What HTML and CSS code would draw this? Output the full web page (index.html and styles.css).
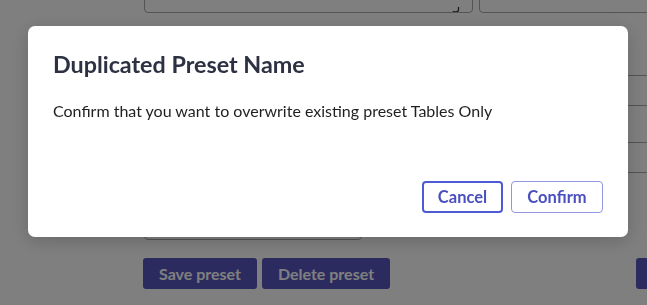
FILE: index.html
```html
<!DOCTYPE html>
<html>
<head>
<meta charset="utf-8">
<link rel="stylesheet" href="styles.css">
</head>
<body>
<div class="page">
  <div class="grid">
    <div class="col">
      <div class="field field-top"><svg class="glyph" width="8" height="6" viewBox="0 0 8 6"><path d="M6.5 0 V2.5 Q6.5 5 3.5 5 Q1.8 5 1 4.2" fill="none" stroke="#333" stroke-width="1.3"/></svg></div>
      <div class="field field-short"></div>
    </div>
    <div class="col">
      <div class="field field-top"></div>
      <div class="field field-a"></div>
      <div class="field field-b"></div>
    </div>
  </div>
  <div class="actions">
    <button class="btn-primary save">Save preset</button>
    <button class="btn-primary delete">Delete preset</button>
    <button class="btn-primary other" aria-label="Apply"></button>
  </div>
</div>
<div class="overlay"></div>
<div class="modal">
  <h2 class="modal-title">Duplicated Preset Name</h2>
  <p class="modal-body">Confirm that you want to overwrite existing preset Tables Only</p>
  <div class="modal-footer">
    <button class="btn-outline btn-focus">Cancel</button>
    <button class="btn-outline btn-confirm">Confirm</button>
  </div>
</div>
</body>
</html>
```
FILE: styles.css
```css
html, body {
  margin: 0;
  padding: 0;
  width: 647px;
  height: 305px;
  overflow: hidden;
  background: #ffffff;
  font-family: Lato, "Open Sans", sans-serif;
}
.page {
  margin-top: -18px;
  padding-left: 144px;
}
.grid {
  display: grid;
  grid-template-columns: 329px 400px;
  column-gap: 6px;
}
.col {
  display: flex;
  flex-direction: column;
}
.field {
  box-sizing: border-box;
  height: 31px;
  border: 1px solid #a8a8a8;
  border-radius: 4px;
  background: #fff;
  position: relative;
  overflow: hidden;
}
.glyph {
  position: absolute;
  left: 307px;
  top: 24px;
}
.field-short {
  width: 218px;
  margin-top: 196px;
}
.field-a {
  margin-top: 62px;
}
.field-b {
  margin-top: 36px;
}
.actions {
  display: flex;
  gap: 5px;
  margin-top: 18px;
  margin-left: -1px;
}
.btn-primary {
  flex: none;
  white-space: nowrap;
  box-sizing: border-box;
  height: 31px;
  border: none;
  border-radius: 3px;
  background: #5656be;
  color: #ffffff;
  font-family: Lato, sans-serif;
  font-weight: 700;
  font-size: 16px;
  padding: 0 13px;
}
.save { width: 114px; }
.delete { width: 128px; }
.other { margin-left: 241px; width: 100px; }
.overlay {
  position: fixed;
  inset: 0;
  background: rgba(0, 0, 0, 0.5);
}
.modal {
  position: fixed;
  left: 28px;
  top: 26px;
  width: 600px;
  height: 211px;
  box-sizing: border-box;
  background: #ffffff;
  border-radius: 7px;
  box-shadow: 0 4px 18px rgba(0, 0, 0, 0.18);
  padding: 24px 25px 24px 25px;
  display: flex;
  flex-direction: column;
}
.modal-title {
  margin: 0;
  font-size: 23.3px;
  line-height: 28px;
  font-weight: 700;
  color: #2d3142;
}
.modal-body {
  margin: 23px 0 0 0;
  font-size: 16px;
  line-height: 20px;
  color: #1f1f1f;
}
.modal-footer {
  margin-top: auto;
  display: flex;
  justify-content: flex-end;
  gap: 8px;
}
.btn-outline {
  box-sizing: border-box;
  height: 32px;
  padding: 0;
  background: #ffffff;
  border: 1px solid #9297e2;
  border-radius: 4px;
  color: #4a4fbf;
  font-family: Lato, sans-serif;
  font-weight: 700;
  font-size: 16.5px;
}
.btn-focus {
  border: 2px solid #4c5bd4;
  width: 81px;
}
.btn-confirm {
  width: 92px;
}
```
